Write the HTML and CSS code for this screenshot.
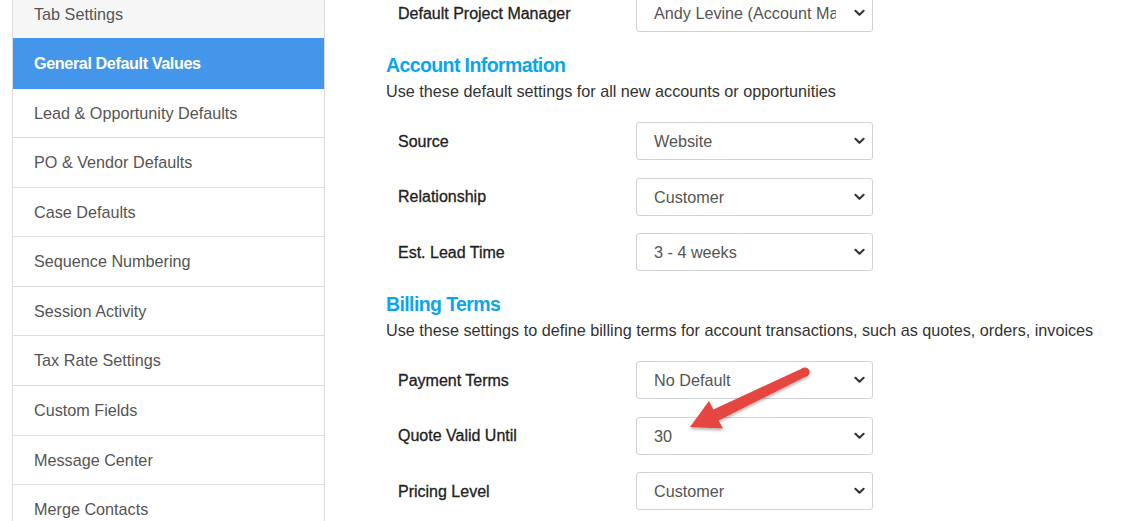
FILE: index.html
```html
<!DOCTYPE html>
<html>
<head>
<meta charset="utf-8">
<link rel="stylesheet" href="styles.css">
</head>
<body>
<div class="page">
  <nav class="sidebar">
    <a class="nav-item nav-muted">Tab Settings</a>
    <a class="nav-item active">General Default Values</a>
    <a class="nav-item">Lead &amp; Opportunity Defaults</a>
    <a class="nav-item">PO &amp; Vendor Defaults</a>
    <a class="nav-item">Case Defaults</a>
    <a class="nav-item">Sequence Numbering</a>
    <a class="nav-item">Session Activity</a>
    <a class="nav-item">Tax Rate Settings</a>
    <a class="nav-item">Custom Fields</a>
    <a class="nav-item">Message Center</a>
    <a class="nav-item">Merge Contacts</a>
  </nav>
  <main class="content">
    <div class="form-row">
      <label class="form-label">Default Project Manager</label>
      <div class="select-wrap"><select class="select"><option>Andy Levine (Account Manager)</option></select><svg class="chev" viewBox="0 0 12 8"><path d="M1.5 1.5 L6 6 L10.5 1.5" /></svg></div>
    </div>

    <h3 class="section-title">Account Information</h3>
    <p class="section-desc">Use these default settings for all new accounts or opportunities</p>

    <div class="form-row">
      <label class="form-label">Source</label>
      <div class="select-wrap"><select class="select"><option>Website</option></select><svg class="chev" viewBox="0 0 12 8"><path d="M1.5 1.5 L6 6 L10.5 1.5" /></svg></div>
    </div>
    <div class="form-row">
      <label class="form-label">Relationship</label>
      <div class="select-wrap"><select class="select"><option>Customer</option></select><svg class="chev" viewBox="0 0 12 8"><path d="M1.5 1.5 L6 6 L10.5 1.5" /></svg></div>
    </div>
    <div class="form-row">
      <label class="form-label">Est. Lead Time</label>
      <div class="select-wrap"><select class="select"><option>3 - 4 weeks</option></select><svg class="chev" viewBox="0 0 12 8"><path d="M1.5 1.5 L6 6 L10.5 1.5" /></svg></div>
    </div>

    <h3 class="section-title">Billing Terms</h3>
    <p class="section-desc">Use these settings to define billing terms for account transactions, such as quotes, orders, invoices</p>

    <div class="form-row">
      <label class="form-label">Payment Terms</label>
      <div class="select-wrap"><select class="select"><option>No Default</option></select><svg class="chev" viewBox="0 0 12 8"><path d="M1.5 1.5 L6 6 L10.5 1.5" /></svg></div>
    </div>
    <div class="form-row">
      <label class="form-label">Quote Valid Until</label>
      <div class="select-wrap"><select class="select"><option>30</option></select><svg class="chev" viewBox="0 0 12 8"><path d="M1.5 1.5 L6 6 L10.5 1.5" /></svg></div>
    </div>
    <div class="form-row">
      <label class="form-label">Pricing Level</label>
      <div class="select-wrap"><select class="select"><option>Customer</option></select><svg class="chev" viewBox="0 0 12 8"><path d="M1.5 1.5 L6 6 L10.5 1.5" /></svg></div>
    </div>
  </main>
</div>
<svg class="arrow" width="140" height="90" viewBox="680 355 140 90">
  <defs>
    <filter id="sh" x="-20%" y="-20%" width="140%" height="160%">
      <feDropShadow dx="0" dy="2" stdDeviation="1.6" flood-color="#000" flood-opacity="0.3"/>
    </filter>
  </defs>
  <g filter="url(#sh)" fill="#e5473f">
    <polygon points="803.1,367.9 713.4,409.6 709,401 690,427 723,428.5 718.6,420.4 806.9,376.1"/>
    <circle cx="805" cy="372" r="4.6"/>
  </g>
</svg>
</body>
</html>
```

FILE: styles.css
```css
* { box-sizing: border-box; }
html, body { margin: 0; padding: 0; background: #fff; overflow: hidden; }
body {
  font-family: "Liberation Sans", Arial, sans-serif;
  font-size: 16.2px;
  color: #333;
  width: 1133px;
  height: 521px;
  position: relative;
}
.page {
  display: flex;
  align-items: flex-start;
}
.sidebar {
  width: 313px;
  margin-left: 12px;
  margin-top: -10.5px;
  border-left: 1px solid #dcdcdc;
  border-right: 1px solid #dcdcdc;
  display: flex;
  flex-direction: column;
  flex: none;
}
.nav-item {
  display: block;
  padding: 14px 21px;
  line-height: 20.56px;
  border-bottom: 1px solid #dedede;
  color: #555;
  text-decoration: none;
  white-space: nowrap;
}
.nav-muted { background: #f6f6f7; }
.nav-item.active {
  background: #4396e9;
  color: #fff;
  font-weight: bold;
  border-bottom-color: #4396e9;
  margin-top: -1px;
  padding-top: 15px;
  letter-spacing: -0.4px;
}
.content {
  margin-left: 61px;
  margin-top: -6px;
  display: flex;
  flex-direction: column;
  flex: 1;
}
.form-row {
  display: flex;
  align-items: center;
  height: 38px;
  margin-bottom: 17.5px;
  padding-left: 12px;
}
.form-label {
  width: 238px;
  padding-top: 1px;
  color: #222;
  -webkit-text-stroke: 0.3px #222;
  font-size: 16px;
}
.select-wrap {
  position: relative;
  width: 237px;
  height: 38px;
}
.select {
  appearance: none;
  -webkit-appearance: none;
  width: 100%;
  height: 100%;
  border: 1px solid #cfd3d7;
  border-radius: 3px;
  background: #fff;
  padding: 0 36px 0 17px;
  font-family: "Liberation Sans", Arial, sans-serif;
  font-size: 16.2px;
  color: #555;
  outline: none;
}
.chev {
  position: absolute;
  right: 8px;
  top: 15px;
  width: 11px;
  height: 8px;
  pointer-events: none;
}
.chev path {
  fill: none;
  stroke: #333;
  stroke-width: 2.2;
  stroke-linecap: round;
  stroke-linejoin: round;
}
.section-title {
  margin: 3.5px 0 3px 0;
  font-size: 19.5px;
  line-height: 24px;
  font-weight: bold;
  color: #0aa5ef;
  letter-spacing: -0.6px;
}
.section-desc {
  margin: 0 0 20px 0;
  padding-top: 1px;
  line-height: 21px;
  color: #333;
}
.arrow {
  position: absolute;
  left: 680px;
  top: 355px;
}
```
